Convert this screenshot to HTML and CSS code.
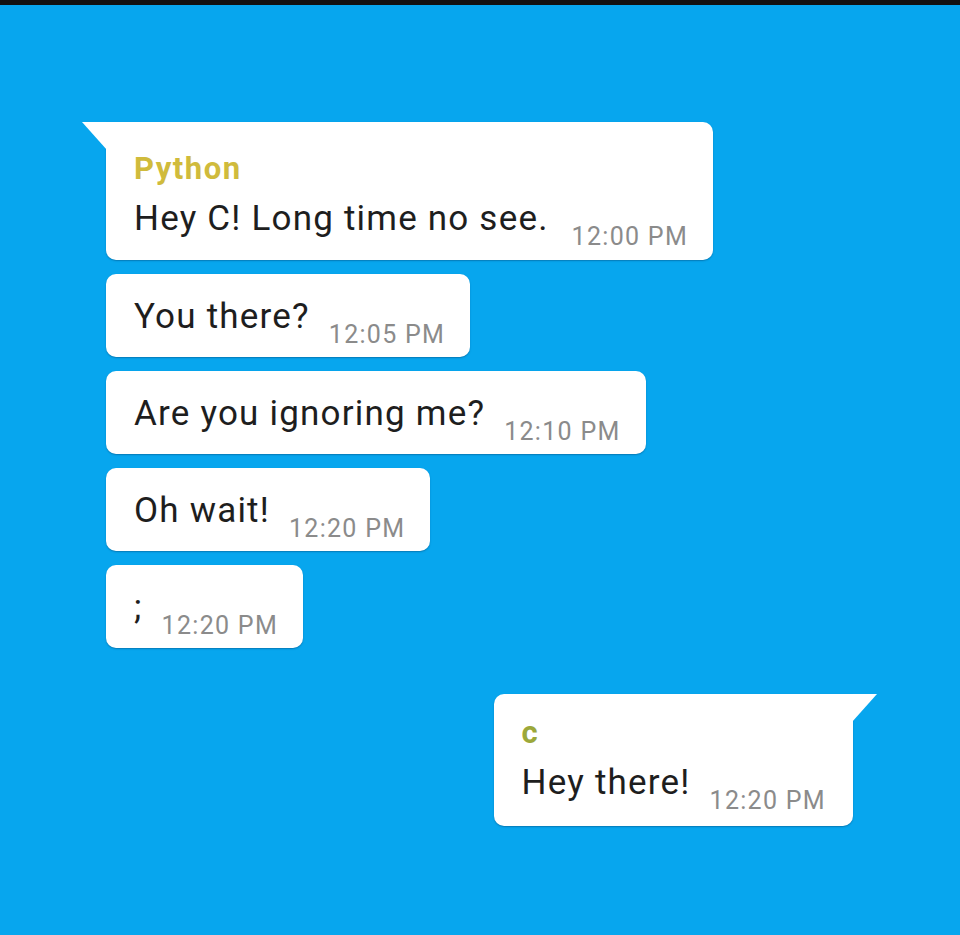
FILE: index.html
```html
<!DOCTYPE html>
<html lang="en">
<head>
<meta charset="utf-8">
<title>Chat</title>
<link rel="stylesheet" href="styles.css">
</head>
<body>
<div class="topbar"></div>
<main class="chat">
  <div class="bubble in first named">
    <div class="name name-python">Python</div>
    <div class="row">
      <span class="text">Hey C! Long time no see.</span>
      <span class="time wide">12:00 PM</span>
    </div>
  </div>
  <div class="bubble in">
    <div class="row">
      <span class="text">You there?</span>
      <span class="time">12:05 PM</span>
    </div>
  </div>
  <div class="bubble in">
    <div class="row">
      <span class="text">Are you ignoring me?</span>
      <span class="time">12:10 PM</span>
    </div>
  </div>
  <div class="bubble in">
    <div class="row">
      <span class="text">Oh wait!</span>
      <span class="time">12:20 PM</span>
    </div>
  </div>
  <div class="bubble in">
    <div class="row">
      <span class="text">;</span>
      <span class="time">12:20 PM</span>
    </div>
  </div>
  <div class="bubble out first named short">
    <div class="name name-c">c</div>
    <div class="row">
      <span class="text">Hey there!</span>
      <span class="time">12:20 PM</span>
    </div>
  </div>
</main>
</body>
</html>
```
FILE: styles.css
```css
html, body {
  margin: 0;
  padding: 0;
}
body {
  width: 960px;
  height: 935px;
  overflow: hidden;
  background: #07a6ee;
  font-family: Roboto, "Liberation Sans", Arial, sans-serif;
}
.topbar {
  height: 5px;
  background: #121212;
}
.chat {
  display: flex;
  flex-direction: column;
  align-items: flex-start;
  gap: 14px;
  padding: 117px 107px 0 106px;
}
.bubble {
  position: relative;
  background: #ffffff;
  border-radius: 10px;
  box-shadow: 0 1px 1.5px rgba(0, 40, 80, 0.35);
  padding: 25px 25px 10px 28px;
}
.bubble.named {
  padding-top: 31px;
  padding-bottom: 11px;
}
.bubble.named.short {
  padding-top: 23px;
  padding-bottom: 13px;
  padding-right: 27px;
}
.bubble.in.first {
  border-top-left-radius: 0;
}
.bubble.out {
  align-self: flex-end;
  margin-top: 32px;
  border-top-right-radius: 0;
}
.bubble.in.first::before,
.bubble.out.first::before {
  content: "";
  position: absolute;
  top: 0;
  width: 25px;
  height: 28px;
  background: #ffffff;
}
.bubble.in.first::before {
  left: -24px;
  clip-path: polygon(0 0, 100% 0, 100% 100%);
}
.bubble.out.first::before {
  right: -24px;
  clip-path: polygon(0 0, 100% 0, 0 100%);
}
.name {
  font-size: 31px;
  font-weight: 700;
  line-height: 1;
  margin-bottom: 17px;
  letter-spacing: 1.5px;
}
.name-python {
  color: #d0bb3c;
}
.name-c {
  color: #9ca83a;
}
.row {
  display: flex;
  align-items: flex-end;
  gap: 19px;
}
.text {
  font-size: 35px;
  line-height: 1;
  color: #1e1e1e;
  letter-spacing: 1.2px;
  margin-bottom: 13px;
}
.time {
  font-size: 25px;
  line-height: 1;
  color: #8b8b8b;
  letter-spacing: 1.3px;
}
.time.wide {
  margin-left: 4px;
}
```
